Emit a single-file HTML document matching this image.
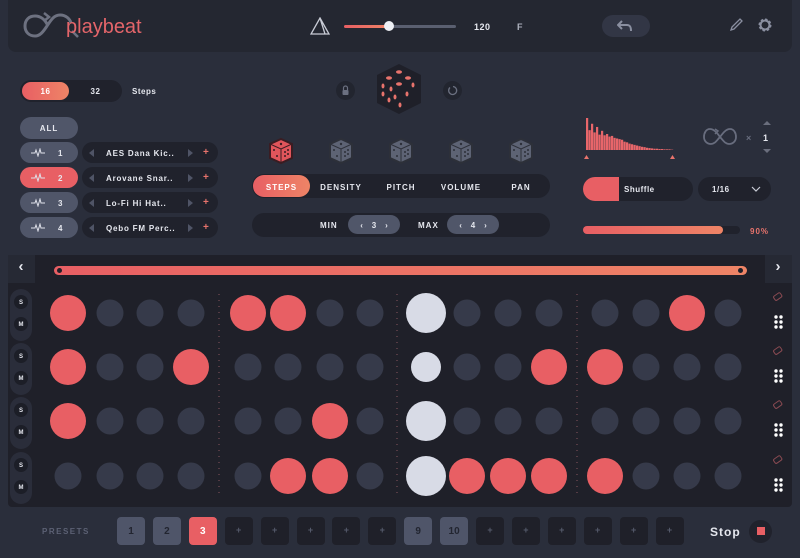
<!DOCTYPE html>
<html><head><meta charset="utf-8"><style>
*{margin:0;padding:0;box-sizing:border-box}
body{width:800px;height:558px;background:#2a2e3b;font-family:"Liberation Sans",sans-serif;font-weight:bold;color:#e6e8ef;position:relative;overflow:hidden}
.a{position:absolute}
.pill{position:absolute;border-radius:12px;background:#20222c}
.t{position:absolute;font-size:8px;letter-spacing:1px;text-align:center}
.grad{background:linear-gradient(90deg,#e85f64,#ee8466)}
</style></head><body>
<div class="a" style="left:8px;top:0;width:784px;height:52px;background:#242731;border-radius:0 0 8px 8px"></div>
<svg class="a" style="left:22px;top:11px" width="60" height="30" viewBox="0 0 60 30">
<path d="M26 15 C23 8 18 5 13 5 C7 5 3 9 3 15 C3 21 7 25 13 25 C18 25 21 21 25 15 C29 9 32 4 38 4 C44 4 48 8 49 12" fill="none" stroke="#6d7180" stroke-width="3"/>
<path d="M22 2 L27 6 L22 10" fill="none" stroke="#6d7180" stroke-width="2.5"/>
<path d="M50 20 L56 26" stroke="#6d7180" stroke-width="2.5"/></svg>
<div class="a" style="left:66px;top:16px;font-size:20px;font-weight:normal;color:#e4656a">playbeat</div>
<svg class="a" style="left:310px;top:17px" width="20" height="18"><path d="M10 1 L19 17 L1 17 Z M10 1 L15 17" fill="none" stroke="#c9ccd6" stroke-width="1.3"/></svg>
<div class="a grad" style="left:344px;top:25px;width:46px;height:3px;border-radius:2px"></div>
<div class="a" style="left:390px;top:25px;width:66px;height:3px;background:#5a5f70;border-radius:2px"></div>
<div class="a" style="left:384px;top:21px;width:10px;height:10px;border-radius:50%;background:#eef0f5"></div>
<div class="t" style="left:474px;top:22px;font-size:9px;letter-spacing:.5px">120</div>
<div class="t" style="left:517px;top:22px;font-size:9px;color:#aeb2bf">F</div>
<div class="pill" style="left:602px;top:15px;width:48px;height:22px;background:#323645;border-radius:11px"></div>
<svg class="a" style="left:617px;top:19px" width="16" height="14"><path d="M5 2 L1 6 L5 10 M1 6 H10 C13 6 14 8 14 12" fill="none" stroke="#8a8fa0" stroke-width="2"/></svg>
<svg class="a" style="left:728px;top:17px" width="16" height="16"><path d="M3 13 L4 10 L12 2 L14 4 L6 12 Z" fill="none" stroke="#8a8fa0" stroke-width="1.3"/></svg>
<svg class="a" style="left:757px;top:17px" width="16" height="16"><circle cx="8" cy="8" r="5" fill="none" stroke="#8a8fa0" stroke-width="3" stroke-dasharray="2.2 1.7"/><circle cx="8" cy="8" r="4.5" fill="none" stroke="#8a8fa0" stroke-width="2"/></svg>

<div class="pill" style="left:20px;top:80px;width:102px;height:22px;border-radius:11px"></div>
<div class="a grad" style="left:22px;top:82px;width:47px;height:18px;border-radius:9px"></div>
<div class="t" style="left:22px;top:87px;width:47px;color:#fff;letter-spacing:.5px">16</div>
<div class="t" style="left:72px;top:87px;width:47px;letter-spacing:.5px">32</div>
<div class="t" style="left:132px;top:87px;letter-spacing:.5px">Steps</div>
<div class="a" style="left:20px;top:117px;width:58px;height:22px;border-radius:11px;background:#505669"></div>
<div class="t" style="left:20px;top:124px;width:58px">ALL</div>
<div id="tracks"></div>

<div class="a" style="left:336px;top:81px;width:19px;height:19px;border-radius:50%;background:#22252f"></div>
<svg class="a" style="left:341px;top:84px" width="9" height="12"><path d="M2.5 6 V4 A2 2 0 0 1 6.5 4 V6" fill="none" stroke="#6b7080" stroke-width="1.2"/><rect x="1.5" y="6" width="6" height="5" rx="1" fill="#6b7080"/></svg>
<div class="a" style="left:443px;top:81px;width:19px;height:19px;border-radius:50%;background:#22252f"></div>
<svg class="a" style="left:447px;top:85px" width="11" height="11"><path d="M3 2.5 A4 4 0 1 0 6 1.5" fill="none" stroke="#6b7080" stroke-width="1.3"/></svg>
<svg class="a" style="left:374px;top:62px" width="50" height="54"><polygon points="25,2 47,13 47,41 25,52 3,41 3,13" fill="#1f2029"/>
<g fill="#e8736c"><ellipse cx="25" cy="10" rx="3" ry="1.7"/><ellipse cx="15" cy="16" rx="3" ry="1.7"/><ellipse cx="34" cy="16" rx="3" ry="1.7"/><ellipse cx="25" cy="22" rx="3" ry="1.7"/><ellipse cx="9" cy="24" rx="1.5" ry="2.5"/><ellipse cx="9" cy="32" rx="1.5" ry="2.5"/><ellipse cx="15" cy="38" rx="1.5" ry="2.5"/><ellipse cx="17" cy="27" rx="1.5" ry="2.5"/><ellipse cx="21" cy="35" rx="1.5" ry="2.5"/><ellipse cx="39" cy="23" rx="1.5" ry="2.5"/><ellipse cx="33" cy="32" rx="1.5" ry="2.5"/><ellipse cx="26" cy="43" rx="1.5" ry="2.5"/></g></svg>
<div id="dice"></div>
<div class="pill" style="left:252px;top:174px;width:298px;height:24px"></div>
<div class="a grad" style="left:253px;top:175px;width:57px;height:22px;border-radius:11px"></div>
<div class="t" style="left:253px;top:183px;width:57px;color:#fff">STEPS</div>
<div class="t" style="left:314px;top:183px;width:54px">DENSITY</div>
<div class="t" style="left:374px;top:183px;width:54px">PITCH</div>
<div class="t" style="left:434px;top:183px;width:54px">VOLUME</div>
<div class="t" style="left:494px;top:183px;width:54px">PAN</div>
<div class="pill" style="left:252px;top:213px;width:298px;height:24px"></div>
<div class="t" style="left:320px;top:221px">MIN</div>
<div class="a" style="left:348px;top:215px;width:52px;height:19px;border-radius:10px;background:#505669"></div>
<div class="t" style="left:348px;top:221px;width:52px;letter-spacing:0">‹&nbsp;&nbsp;&nbsp;&nbsp;3&nbsp;&nbsp;&nbsp;&nbsp;›</div>
<div class="t" style="left:418px;top:221px">MAX</div>
<div class="a" style="left:447px;top:215px;width:52px;height:19px;border-radius:10px;background:#505669"></div>
<div class="t" style="left:447px;top:221px;width:52px;letter-spacing:0">‹&nbsp;&nbsp;&nbsp;&nbsp;4&nbsp;&nbsp;&nbsp;&nbsp;›</div>

<svg id="hist" class="a" style="left:583px;top:114px" width="95" height="46"></svg>
<svg class="a" style="left:702px;top:127px" width="36" height="20"><path d="M18 10 C14 4 11 2 8 2 C4 2 2 6 2 10 C2 14 5 17 9 17 C13 17 15 13 18 10 C21 6 24 2 28 2 C32 2 34 6 34 10 C34 14 31 17 27 17 C23 17 21 13 18 10" fill="none" stroke="#686d7e" stroke-width="1.8"/><path d="M13 2 L16 4 L13 7" fill="none" stroke="#686d7e" stroke-width="1.5"/></svg>
<div class="t" style="left:746px;top:133px;color:#686d7e;font-size:9px">×</div>
<div class="t" style="left:763px;top:133px;font-size:9px">1</div>
<svg class="a" style="left:761px;top:118px" width="12" height="38"><path d="M2 7 L6 3 L10 7Z M2 31 L6 35 L10 31Z" fill="#6a6e7d"/></svg>
<div class="pill" style="left:583px;top:177px;width:110px;height:24px"></div>
<div class="a" style="left:583px;top:177px;width:36px;height:24px;border-radius:12px 0 0 12px;background:#e85f64"></div>
<div class="t" style="left:624px;top:185px;letter-spacing:.5px">Shuffle</div>
<div class="pill" style="left:698px;top:177px;width:73px;height:24px"></div>
<div class="t" style="left:712px;top:185px;letter-spacing:.5px">1/16</div>
<svg class="a" style="left:751px;top:185px" width="10" height="8"><path d="M1 2 L5 6 L9 2" fill="none" stroke="#c9ccd6" stroke-width="1.2"/></svg>
<div class="a" style="left:583px;top:226px;width:157px;height:8px;border-radius:4px;background:#20222c"></div>
<div class="a grad" style="left:583px;top:226px;width:140px;height:8px;border-radius:4px"></div>
<div class="t" style="left:750px;top:227px;color:#e8736c">90%</div>

<div class="a" style="left:8px;top:255px;width:784px;height:252px;background:#1f2029;border-radius:4px"></div>
<div class="a" style="left:8px;top:255px;width:27px;height:28px;background:#262934"></div>
<div class="a" style="left:765px;top:255px;width:27px;height:28px;background:#262934"></div>
<div class="t" style="left:8px;top:258px;width:27px;font-size:15px">‹</div>
<div class="t" style="left:765px;top:258px;width:27px;font-size:15px">›</div>
<div class="a grad" style="left:54px;top:266px;width:693px;height:9px;border-radius:5px"></div>
<div class="a" style="left:57px;top:268px;width:5px;height:5px;border-radius:50%;background:#1f2029"></div>
<div class="a" style="left:738px;top:268px;width:5px;height:5px;border-radius:50%;background:#1f2029"></div>
<svg id="grid" class="a" style="left:0;top:280px" width="800" height="230"></svg>

<div class="t" style="left:42px;top:527px;color:#5c6174;letter-spacing:1.5px">PRESETS</div>
<div id="pre"></div>
<div class="t" style="left:710px;top:525px;font-size:12px;letter-spacing:1px">Stop</div>
<div class="a" style="left:749px;top:520px;width:23px;height:23px;border-radius:50%;background:#20222c"></div>
<div class="a" style="left:757px;top:527px;width:8px;height:8px;background:#e85f64"></div>

<script>
let h='';
const names=['AES Dana Kic..','Arovane Snar..','Lo-Fi Hi Hat..','Qebo FM Perc..'];
for(let i=0;i<4;i++){let y=142+i*25;
h+=`<div class="a" style="left:20px;top:${y}px;width:58px;height:21px;border-radius:11px;background:${i==1?'#e85f64':'#505669'}"></div>
<svg class="a" style="left:31px;top:${y+6}px" width="14" height="9"><path d="M0 5 H4 L5 2 L7 8 L9 1 L10 5 H14" fill="none" stroke="#dfe1ea" stroke-width="1"/></svg>
<div class="t" style="left:58px;top:${y+7}px">${i+1}</div>
<div class="pill" style="left:82px;top:${y}px;width:136px;height:21px;border-radius:11px"></div>
<svg class="a" style="left:88px;top:${y+6}px" width="110" height="10"><path d="M6 1 L1 5 L6 9Z M100 1 L105 5 L100 9Z" fill="#4f5466"/></svg>
<div class="t" style="left:106px;top:${y+7}px;text-align:left;letter-spacing:.8px">${names[i]}</div>
<div class="t" style="left:203px;top:${y+5}px;color:#e8736c;font-size:10px">+</div>`;}
document.getElementById('tracks').innerHTML=h;
h='';[281,341,401,461,521].forEach((x,i)=>{let c=i==0?'#e0555b':'#5d6374',d=i==0?'#3a1c22':'#2d3039';
h+=`<svg class="a" style="left:${x-13}px;top:137px" width="26" height="28"><polygon points="13,2 24,7 24,21 13,26 2,21 2,7" fill="${c}" stroke="${d}" stroke-width="2"/><path d="M2 7 L13 12 L24 7 M13 12 V26" stroke="${d}" stroke-width="1" fill="none"/><g fill="${d}"><circle cx="6" cy="13" r="1"/><circle cx="9" cy="19" r="1"/><circle cx="17" cy="15" r="1"/><circle cx="20" cy="13" r="1"/><circle cx="17" cy="19" r="1"/><circle cx="20" cy="17" r="1"/><circle cx="13" cy="7" r="1.2"/></g></svg>`;});
document.getElementById('dice').innerHTML=h;
let s='';const hs=[1,.62,.82,.55,.72,.48,.6,.46,.5,.42,.44,.38,.36,.34,.32,.26,.24,.2,.18,.16,.14,.12,.1,.09,.07,.06,.05,.04,.04,.03,.03,.02,.02,.02,.01];
hs.forEach((v,i)=>{let hh=v*32;s+=`<rect x="${3+i*2.5}" y="${36-hh}" width="2.2" height="${hh}" fill="#e8666a"/>`});
s+='<path d="M1 45 L3.5 41 L6 45Z M87 45 L89.5 41 L92 45Z" fill="#e8736c"/>';
document.getElementById('hist').innerHTML=s;
const X=[68,110,150,191,248,288,330,370,426,467,508,549,605,646,687,728],Y=[33,87,141,196];
const pat=['1000110020000010','1001000020011000','1000001020000000','0000011021111000'];
s='';
[219,397,577].forEach(x=>{s+=`<line x1="${x}" y1="14" x2="${x}" y2="214" stroke="#8a5660" stroke-width="1" stroke-dasharray="1 5"/>`});
Y.forEach((y,r)=>{s+=`<rect x="10" y="${y-24}" width="22" height="52" rx="11" fill="#2a2d3a"/><circle cx="21" cy="${y-11}" r="7" fill="#1c1e27"/><circle cx="21" cy="${y+11}" r="7" fill="#1c1e27"/><text x="21" y="${y-9}" font-size="6" fill="#e6e8ef" text-anchor="middle" font-weight="bold" font-family="Liberation Sans">S</text><text x="21" y="${y+13}" font-size="6" fill="#e6e8ef" text-anchor="middle" font-weight="bold" font-family="Liberation Sans">M</text>`;
s+=`<rect x="774" y="${y-19}" width="8" height="5" rx="1.5" transform="rotate(-35 778 ${y-16})" fill="none" stroke="#8a4a52" stroke-width="1"/>`;
for(let a=0;a<3;a++)for(let b=0;b<2;b++)s+=`<circle cx="${776+b*5}" cy="${y+4+a*5}" r="1.7" fill="#fff"/>`;
X.forEach((x,c)=>{let p=pat[r][c];
if(p=='1')s+=`<circle cx="${x}" cy="${y}" r="18" fill="#e85f64"/>`;
else if(p=='2')s+=`<circle cx="${x}" cy="${y}" r="${r==1?15:20}" fill="#d8dbe6"/>`;
else s+=`<circle cx="${x}" cy="${y}" r="13.5" fill="#363a4a"/>`;});});
document.getElementById('grid').innerHTML=s;
h='';for(let i=0;i<16;i++){let x=117+i*35.9,l=['1','2','3','+','+','+','+','+','9','10','+','+','+','+','+','+'][i];
let bg=i==2?'#e85f64':(l=='+'?'#1f2029':'#4f5569'),col=i==2?'#fff':(l=='+'?'#555a6b':'#222530');
h+=`<div class="a" style="left:${x}px;top:517px;width:28px;height:28px;border-radius:4px;background:${bg}"></div><div class="t" style="left:${x}px;top:${l=='+'?525:526}px;width:28px;color:${col};font-size:${l=='+'?9:10}px;letter-spacing:0">${l}</div>`;}
document.getElementById('pre').innerHTML=h;
</script>
</body></html>
